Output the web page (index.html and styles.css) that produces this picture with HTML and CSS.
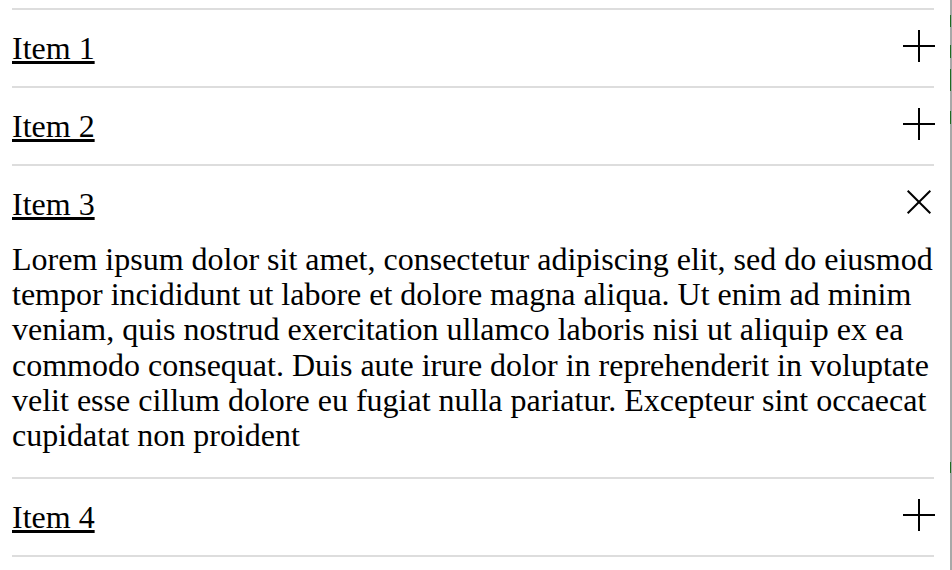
FILE: index.html
```html
<!DOCTYPE html>
<html>
<head>
<meta charset="utf-8">
<link rel="stylesheet" href="styles.css">
</head>
<body>
<div class="accordion">
  <div class="item">
    <div class="header"><a class="title" href="#">Item 1</a><span class="icon"></span></div>
  </div>
  <div class="item">
    <div class="header"><a class="title" href="#">Item 2</a><span class="icon"></span></div>
  </div>
  <div class="item open">
    <div class="header"><a class="title" href="#">Item 3</a><span class="icon"></span></div>
    <p class="content">Lorem ipsum dolor sit amet, consectetur adipiscing elit, sed do eiusmod tempor incididunt ut labore et dolore magna aliqua. Ut enim ad minim veniam, quis nostrud exercitation ullamco laboris nisi ut aliquip ex ea commodo consequat. Duis aute irure dolor in reprehenderit in voluptate velit esse cillum dolore eu fugiat nulla pariatur. Excepteur sint occaecat cupidatat non proident</p>
  </div>
  <div class="item">
    <div class="header"><a class="title" href="#">Item 4</a><span class="icon"></span></div>
  </div>
</div>
<div class="edge">
  <span class="mark m1"></span>
  <span class="mark m2"></span>
  <span class="mark m3"></span>
  <span class="mark m4"></span>
  <span class="mark m5"></span>
</div>
</body>
</html>
```

FILE: styles.css
```css
html, body {
  margin: 0;
  padding: 0;
  background: #fff;
}
body {
  font-family: "Liberation Serif", "Times New Roman", serif;
  color: #000;
  overflow: hidden;
}
.accordion {
  margin: 8px 0 0 12px;
  width: 922px;
  border-bottom: 2px solid #ddd;
}
.item {
  border-top: 2px solid #ddd;
}
.header {
  display: flex;
  justify-content: space-between;
  align-items: flex-start;
  padding: 20px 0;
  line-height: 36px;
  font-size: 32px;
}
.title {
  color: #000;
  text-decoration: underline;
}
.icon {
  position: relative;
  width: 32px;
  height: 32px;
  margin-right: -1px;
}
.icon::before,
.icon::after {
  content: "";
  position: absolute;
  background: #000;
}
.icon::before {
  left: 0;
  top: 15px;
  width: 32px;
  height: 2px;
}
.icon::after {
  left: 15px;
  top: 0;
  width: 2px;
  height: 32px;
}
.open .icon {
  transform: rotate(45deg);
}
.content {
  margin: 0 0 24px;
  font-size: 32px;
  line-height: 35.2px;
}
.edge {
  position: fixed;
  top: 0;
  right: 0;
  width: 2px;
  height: 100%;
  background: #a8a8a8;
}
.mark {
  position: absolute;
  left: 0;
  width: 1px;
  background: #1f6b1f;
}
.m1 { top: 15px; height: 12px; }
.m2 { top: 45px; height: 13px; }
.m3 { top: 69px; height: 22px; }
.m4 { top: 111px; height: 13px; }
.m5 { top: 462px; height: 11px; }
```
